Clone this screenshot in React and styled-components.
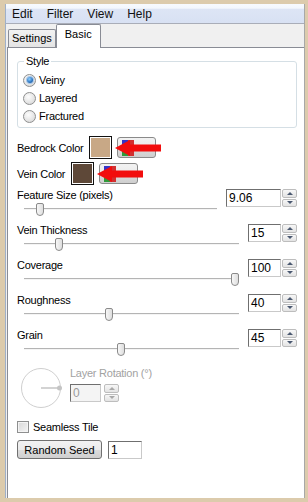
import React from 'react';
import styled, { createGlobalStyle } from 'styled-components';

const GlobalStyle = createGlobalStyle`
  html, body {
    margin: 0;
    padding: 0;
    background: #dccbac;
  }
  body {
    font-family: "Liberation Sans", Arial, sans-serif;
    font-size: 11px;
    color: #000;
  }
`;

const Frame = styled.div`
  width: 308px;
  height: 502px;
  box-sizing: border-box;
  padding: 4px 3px 4px 5px;
  background: #dccbac;
`;

const Window = styled.div`
  height: 100%;
  box-sizing: border-box;
  display: flex;
  flex-direction: column;
  background: #f0f0f0;
  border-left: 1px solid #9fb0c8;
  border-right: 1px solid #a8a8a8;
`;

const MenuBar = styled.div`
  height: 19px;
  flex: none;
  display: flex;
  align-items: center;
  padding-left: 6px;
  background: linear-gradient(#f7fafe 0%, #f3f7fd 22%, #dde5f5 28%, #d8e1f3 100%);
  border-bottom: 1px solid #a9adb8;
`;

const MenuItem = styled.span`
  font-size: 12px;
  margin-right: 14px;
  color: #111;
`;

const TabStrip = styled.div`
  height: 23px;
  flex: none;
  display: flex;
  align-items: flex-end;
  padding-left: 2px;
`;

const Tab = styled.div`
  box-sizing: border-box;
  height: ${p => (p.$active ? '24px' : '18px')};
  margin-bottom: ${p => (p.$active ? '-1px' : '0')};
  padding: ${p => (p.$active ? '3px 8px 0' : '2px 3px 0')};
  border: 1px solid #898c95;
  border-bottom: none;
  border-radius: 2px 2px 0 0;
  background: ${p => (p.$active ? '#fff' : 'linear-gradient(#f2f2f2, #e4e4e4)')};
  position: relative;
  z-index: ${p => (p.$active ? 1 : 0)};
`;

const Panel = styled.div`
  flex: 1;
  margin-left: 1px;
  background: #fff;
  border: 1px solid #898c95;
  border-right: none;
  border-bottom: none;
  padding: 7px 7px 0 9px;
  display: flex;
  flex-direction: column;
  letter-spacing: -0.25px;
`;

const GroupBox = styled.fieldset`
  margin: 0;
  min-width: 0;
  padding: 3px 6px 2px 5px;
  border: 1px solid #d5dfe5;
  border-radius: 3px;
`;

const Legend = styled.legend`
  padding: 0 2px;
  line-height: 13px;
  margin-left: 1px;
`;

const RadioRow = styled.label`
  display: flex;
  align-items: center;
  height: 18px;
  gap: 3px;
`;

const RadioDot = styled.span`
  box-sizing: border-box;
  width: 13px;
  height: 13px;
  border-radius: 50%;
  border: 1px solid #8e8f8f;
  background: radial-gradient(circle at 40% 35%, #fdfdfd 0%, #e6e6e6 55%, #cfcfcf 100%);
  display: flex;
  align-items: center;
  justify-content: center;
  &::after {
    content: '';
    width: 6px;
    height: 6px;
    border-radius: 50%;
    display: ${p => (p.$checked ? 'block' : 'none')};
    background: radial-gradient(circle at 40% 35%, #8fd0ff 0%, #2a73c0 60%, #174a8a 100%);
    box-shadow: 0 0 0 1px #a6c6e8;
  }
`;

const ColorRow = styled.div`
  display: flex;
  align-items: center;
  height: 23px;
  margin-top: ${p => p.$top}px;
`;

const SwatchWrap = styled.div`
  position: relative;
  margin-left: 6px;
`;

const Swatch = styled.div`
  box-sizing: border-box;
  width: 23px;
  height: 23px;
  border: 1px solid #111;
  box-shadow: inset 0 0 0 1px #fff;
  background: ${p => p.$color};
`;

const Arrow = styled.svg`
  position: absolute;
  left: calc(100% + 3px);
  top: 50%;
  transform: translateY(-50%);
  z-index: 2;
`;

const PickerButton = styled.button`
  box-sizing: border-box;
  width: 39px;
  height: 21px;
  margin-left: 5px;
  padding: 0 0 0 4px;
  border: 1px solid #8a8a8a;
  border-radius: 3px;
  background: linear-gradient(#f2f2f2 0%, #ebebeb 50%, #dddddd 51%, #cfcfcf 100%);
  display: flex;
  align-items: center;
`;

const Sliders = styled.div`
  display: flex;
  flex-direction: column;
  gap: 7px;
  margin-top: 3px;
`;

const SliderRow = styled.div`
  display: grid;
  grid-template-columns: 1fr auto;
  column-gap: 9px;
`;

const Label = styled.div`
  line-height: 14px;
  height: 14px;
  color: ${p => (p.$disabled ? '#a2a2a2' : '#000')};
  white-space: nowrap;
`;

const Track = styled.div`
  position: relative;
  height: 14px;
  margin-left: 7px;
  &::before {
    content: '';
    position: absolute;
    left: 0;
    right: 0;
    top: 6px;
    height: 1px;
    background: #b4b4b4;
    border-bottom: 1px solid #f4f4f4;
  }
`;

const Thumb = styled.div`
  position: absolute;
  top: 1px;
  width: 8px;
  height: 13px;
  box-sizing: border-box;
  border: 1px solid #8a8a8a;
  border-radius: 2px 2px 4px 4px;
  background: linear-gradient(90deg, #f7f7f7, #dedede);
`;

const Spin = styled.div`
  display: flex;
  gap: ${p => (p.$gap ?? 1)}px;
  align-self: start;
  margin-top: 1px;
`;

const Field = styled.div`
  box-sizing: border-box;
  width: ${p => p.$w}px;
  height: 18px;
  padding-left: 2px;
  border: 1px solid;
  border-color: #6f6f6f #c9c9c9 #c9c9c9 #6f6f6f;
  background: ${p => (p.$disabled ? '#f4f4f4' : '#fff')};
  color: ${p => (p.$disabled ? '#9a9a9a' : '#000')};
  font-size: 12px;
  line-height: 16px;
  letter-spacing: 0;
`;

const SpinButtons = styled.div`
  display: flex;
  flex-direction: column;
  gap: 1px;
  width: 15px;
  height: 18px;
`;

const SpinButton = styled.div`
  flex: 1;
  box-sizing: border-box;
  border: 1px solid #bdbdbd;
  border-radius: 2px;
  background: linear-gradient(#f7f7f7, #e3e3e3);
  display: flex;
  align-items: center;
  justify-content: center;
  &::after {
    content: '';
    border-left: 3px solid transparent;
    border-right: 3px solid transparent;
    ${p => (p.$up ? 'border-bottom' : 'border-top')}: 3px solid ${p => (p.$disabled ? '#a8a8a8' : '#4a5870')};
  }
`;

const RotationBlock = styled.div`
  display: flex;
  margin-top: 10px;
`;

const Dial = styled.svg`
  margin: 2px 7px 0 4px;
  flex: none;
`;

const RotationColumn = styled.div`
  display: flex;
  flex-direction: column;
  gap: 3px;
`;

const CheckRow = styled.label`
  display: flex;
  align-items: center;
  gap: 4px;
  height: 14px;
  margin-top: 10px;
`;

const CheckBox = styled.span`
  box-sizing: border-box;
  width: 12px;
  height: 12px;
  border: 1px solid #8e8f8f;
  background: linear-gradient(135deg, #d8d8d8, #f4f4f4);
  box-shadow: inset 0 0 0 1px #f4f4f4;
`;

const SeedRow = styled.div`
  display: flex;
  align-items: center;
  gap: 6px;
  margin-top: 6px;
`;

const PushButton = styled.button`
  box-sizing: border-box;
  width: 85px;
  height: 19px;
  padding: 0;
  border: 1px solid #707070;
  border-radius: 3px;
  background: linear-gradient(#f2f2f2 0%, #ebebeb 50%, #dddddd 51%, #cfcfcf 100%);
  font-family: "Liberation Sans", Arial, sans-serif;
  font-size: 11px;
  color: #000;
`;

const PaletteIcon = () => (
  <svg width="12" height="16" viewBox="0 0 12 16">
    <rect x="0" y="0" width="6" height="8" fill="#3434c8" />
    <rect x="0" y="8" width="6" height="8" fill="#2f9a3a" />
    <rect x="6" y="0" width="6" height="16" fill="#d23030" />
  </svg>
);

const RedArrow = () => (
  <Arrow width="46" height="16" viewBox="0 0 46 16">
    <polygon points="0,8 15,0 15,4.5 46,4.5 46,11.5 15,11.5 15,16" fill="#f20d0d" />
  </Arrow>
);

const SpinBox = ({ value, width, disabled, gap }) => (
  <Spin $gap={gap}>
    <Field $w={width} $disabled={disabled}>{value}</Field>
    <SpinButtons>
      <SpinButton $up $disabled={disabled} />
      <SpinButton $disabled={disabled} />
    </SpinButtons>
  </Spin>
);

const sliders = [
  { label: 'Feature Size (pixels)', value: '9.06', pos: 0.065, width: 55 },
  { label: 'Vein Thickness', value: '15', pos: 0.15, width: 33 },
  { label: 'Coverage', value: '100', pos: 1, width: 33 },
  { label: 'Roughness', value: '40', pos: 0.39, width: 33 },
  { label: 'Grain', value: '45', pos: 0.45, width: 33 },
];

const App = () => {
  return (
    <Frame>
      <GlobalStyle />
      <Window>
        <MenuBar>
          <MenuItem>Edit</MenuItem>
          <MenuItem>Filter</MenuItem>
          <MenuItem>View</MenuItem>
          <MenuItem>Help</MenuItem>
        </MenuBar>
        <TabStrip>
          <Tab>Settings</Tab>
          <Tab $active>Basic</Tab>
        </TabStrip>
        <Panel>
          <GroupBox>
            <Legend>Style</Legend>
            <RadioRow><RadioDot $checked />Veiny</RadioRow>
            <RadioRow><RadioDot />Layered</RadioRow>
            <RadioRow><RadioDot />Fractured</RadioRow>
          </GroupBox>

          <ColorRow $top={8}>
            Bedrock Color
            <SwatchWrap>
              <Swatch $color="#c8a886" />
              <RedArrow />
            </SwatchWrap>
            <PickerButton><PaletteIcon /></PickerButton>
          </ColorRow>
          <ColorRow $top={3}>
            Vein Color
            <SwatchWrap>
              <Swatch $color="#5e4838" />
              <RedArrow />
            </SwatchWrap>
            <PickerButton><PaletteIcon /></PickerButton>
          </ColorRow>

          <Sliders>
            {sliders.map(s => (
              <SliderRow key={s.label}>
                <div>
                  <Label>{s.label}</Label>
                  <Track>
                    <Thumb style={{ left: `calc((100% - 8px) * ${s.pos})` }} />
                  </Track>
                </div>
                <SpinBox value={s.value} width={s.width} />
              </SliderRow>
            ))}
          </Sliders>

          <RotationBlock>
            <Dial width="42" height="42" viewBox="0 0 42 42">
              <circle cx="20" cy="20" r="19.5" fill="none" stroke="#cfcfcf" strokeWidth="1" />
              <line x1="20" y1="20" x2="38" y2="20" stroke="#c4c4c4" strokeWidth="1.5" />
              <circle cx="38.5" cy="20" r="2.5" fill="#c4c4c4" />
            </Dial>
            <RotationColumn>
              <Label $disabled>Layer Rotation (°)</Label>
              <SpinBox value="0" width={31} disabled gap={3} />
            </RotationColumn>
          </RotationBlock>

          <CheckRow><CheckBox />Seamless Tile</CheckRow>

          <SeedRow>
            <PushButton>Random Seed</PushButton>
            <Field $w={34}>1</Field>
          </SeedRow>
        </Panel>
      </Window>
    </Frame>
  );
};

export default App;
